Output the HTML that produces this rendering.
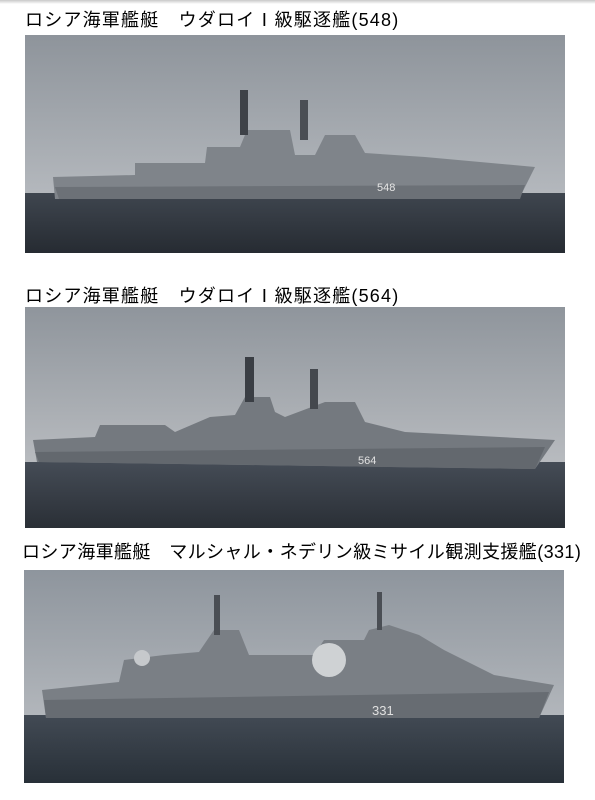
<!DOCTYPE html>
<html><head><meta charset="utf-8"><style>
html,body{margin:0;padding:0;background:#fff;width:595px;height:800px;overflow:hidden;position:relative;font-family:"Liberation Sans","Noto Sans CJK JP",sans-serif}
.bar{position:absolute;left:0;top:0;width:595px;height:4px;background:linear-gradient(#c8c8c8,#fff)}
.t{position:absolute;font-size:18px;color:#000;white-space:nowrap;line-height:20px}
.img{position:absolute;overflow:hidden}
svg{display:block}
</style></head><body>
<div class="bar"></div>
<div class="t" style="left:25px;top:10px;letter-spacing:1.2px">ロシア海軍艦艇　ウダロイⅠ級駆逐艦(548)</div>
<div class="img" style="left:25px;top:35px;width:540px;height:218px">
<svg width="540" height="218">
<defs><linearGradient id="s1" x1="0" y1="0" x2="0" y2="1"><stop offset="0" stop-color="#8e949b"/><stop offset="1" stop-color="#b4b8bd"/></linearGradient>
<linearGradient id="w1" x1="0" y1="0" x2="0" y2="1"><stop offset="0" stop-color="#3f464f"/><stop offset="1" stop-color="#262b32"/></linearGradient></defs>
<rect width="540" height="160" fill="url(#s1)"/><rect y="158" width="540" height="60" fill="url(#w1)"/>
<polygon points="28,142 110,140 110,128 180,128 182,112 215,112 222,95 265,95 270,120 290,120 300,100 330,100 340,118 400,122 510,132 495,162 30,164" fill="#7f848a"/>
<rect x="215" y="55" width="8" height="45" fill="#3e4248"/><rect x="275" y="65" width="8" height="40" fill="#4a4e54"/>
<polygon points="30,152 500,150 495,164 34,164" fill="#6c7177"/>
<text x="352" y="156" font-size="11" fill="#e6e6e6" font-family="Liberation Sans">548</text>
</svg></div>
<div class="t" style="left:25px;top:286px;letter-spacing:1.2px">ロシア海軍艦艇　ウダロイⅠ級駆逐艦(564)</div>
<div class="img" style="left:25px;top:307px;width:540px;height:221px">
<svg width="540" height="221">
<defs><linearGradient id="s2" x1="0" y1="0" x2="0" y2="1"><stop offset="0" stop-color="#8f959c"/><stop offset="1" stop-color="#b9bcc0"/></linearGradient>
<linearGradient id="w2" x1="0" y1="0" x2="0" y2="1"><stop offset="0" stop-color="#454c56"/><stop offset="1" stop-color="#2a2f36"/></linearGradient></defs>
<rect width="540" height="160" fill="url(#s2)"/><rect y="155" width="540" height="66" fill="url(#w2)"/>
<polygon points="8,133 70,130 75,118 140,118 150,125 185,110 210,108 220,90 245,90 250,105 260,110 300,95 330,95 340,115 380,125 530,133 510,162 12,155" fill="#74797f"/>
<rect x="220" y="50" width="9" height="45" fill="#3a3e44"/><rect x="285" y="62" width="8" height="40" fill="#44484e"/>
<polygon points="10,145 520,140 510,162 14,155" fill="#63686e"/>
<text x="333" y="157" font-size="11" fill="#e0e0e0" font-family="Liberation Sans">564</text>
</svg></div>
<div class="t" style="left:22px;top:542px;letter-spacing:0.4px">ロシア海軍艦艇　マルシャル・ネデリン級ミサイル観測支援艦(331)</div>
<div class="img" style="left:24px;top:570px;width:540px;height:213px">
<svg width="540" height="213">
<defs><linearGradient id="s3" x1="0" y1="0" x2="0" y2="1"><stop offset="0" stop-color="#8e959d"/><stop offset="1" stop-color="#b3b7bc"/></linearGradient>
<linearGradient id="w3" x1="0" y1="0" x2="0" y2="1"><stop offset="0" stop-color="#424a54"/><stop offset="1" stop-color="#283038"/></linearGradient></defs>
<rect width="540" height="150" fill="url(#s3)"/><rect y="145" width="540" height="68" fill="url(#w3)"/>
<polygon points="18,120 95,112 100,90 140,85 175,82 190,60 215,60 225,85 290,85 300,70 340,70 345,60 365,55 395,65 420,80 470,105 530,115 515,148 22,148" fill="#7a7f85"/>
<circle cx="305" cy="90" r="17" fill="#cfd2d4"/><circle cx="118" cy="88" r="8" fill="#c6c9cc"/>
<rect x="190" y="25" width="6" height="40" fill="#4a4e54"/><rect x="353" y="22" width="5" height="38" fill="#4a4e54"/>
<polygon points="20,130 525,122 515,148 22,148" fill="#676c72"/>
<text x="348" y="145" font-size="13" fill="#e0e0e0" font-family="Liberation Sans">331</text>
</svg></div>
</body></html>
